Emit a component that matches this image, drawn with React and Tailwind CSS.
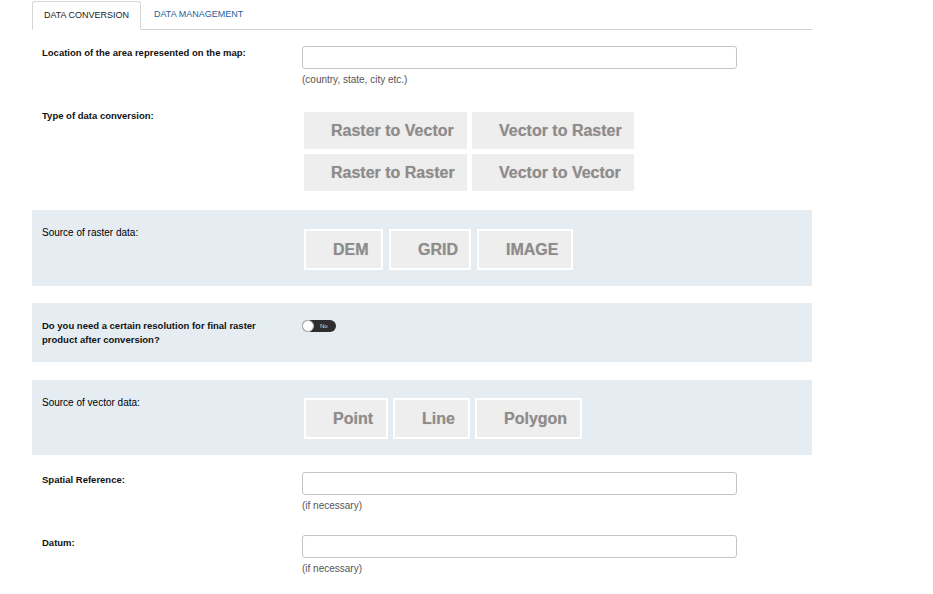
import React from 'react';

const font = { fontFamily: '"Liberation Sans", Arial, sans-serif' };

const Label = ({ children, bold = true }) => (
  <div className={`w-[260px] shrink-0 leading-[14px] ${bold ? 'font-bold text-[9.5px] text-[#111]' : 'text-[10px] text-black'}`}>{children}</div>
);

const TextField = ({ hint }) => (
  <div>
    <div className="w-[435px] h-[23px] border border-[#c4c4c4] rounded-[3px] bg-white" />
    <p className="mt-[5px] text-[10px] leading-[11px] text-[#555]">{hint}</p>
  </div>
);

const Choice = ({ children, w, framed }) => (
  <div
    className={`flex items-center bg-[#eeeeee] pl-[27px] text-[16px] font-bold text-[#8c8c8c] [text-shadow:0_0_1px_#c8b8b8] ${
      framed ? 'h-[41px] border-2 border-white' : 'h-[37px]'
    }`}
    style={{ width: w }}
  >
    {children}
  </div>
);

const Panel = ({ children, className }) => (
  <div className={`flex bg-[#e5edf3] pl-[10px] ${className}`}>{children}</div>
);

export default function App() {
  return (
    <div className="min-h-[594px] bg-white" style={font}>
      <div className="ml-[32px] w-[780px]">
        {/* Tabs */}
        <div className="flex h-[30px] pt-[1px] border-b border-[#cfcfcf]">
          <div className="w-[109px] -mb-[1px] flex items-center justify-center border border-b-white border-[#d6d6d6] rounded-t-[3px] bg-white text-[9px] text-[#222]">
            DATA CONVERSION
          </div>
          <div className="flex items-center pl-[13px] text-[9px] text-[#1f5f9a]">DATA MANAGEMENT</div>
        </div>

        {/* Location */}
        <div className="flex pl-[10px] pt-[16px]">
          <Label>Location of the area represented on the map:</Label>
          <TextField hint="(country, state, city etc.)" />
        </div>

        {/* Type of conversion */}
        <div className="flex pl-[10px] pt-[24px] pb-[19px]">
          <Label>Type of data conversion:</Label>
          <div className="pl-[2px] pt-[3px] grid grid-cols-[163px_162px] gap-x-[5px] gap-y-[5px]">
            <Choice w={163}>Raster to Vector</Choice>
            <Choice w={162}>Vector to Raster</Choice>
            <Choice w={163}>Raster to Raster</Choice>
            <Choice w={162}>Vector to Vector</Choice>
          </div>
        </div>

        {/* Raster source */}
        <Panel className="h-[76px] pt-[16px]">
          <Label bold={false}>Source of raster data:</Label>
          <div className="pl-[2px] pt-[3px] flex gap-[6px]">
            <Choice w={79} framed>DEM</Choice>
            <Choice w={82} framed>GRID</Choice>
            <Choice w={96} framed>IMAGE</Choice>
          </div>
        </Panel>

        {/* Resolution */}
        <Panel className="mt-[17px] h-[59px] pt-[15px]">
          <div className="pt-[1px]">
            <Label>
              Do you need a certain resolution for final raster
              <br />
              product after conversion?
            </Label>
          </div>
          <div className="pt-[2px]">
            <div className="relative w-[34px] h-[12px] rounded-full bg-[#2e2e2e]">
              <div className="absolute left-0 top-0 w-[12px] h-[12px] rounded-full bg-white border border-[#bbb]" />
              <span className="absolute left-[18px] top-[2px] text-[6px] leading-[8px] text-[#ddd]">No</span>
            </div>
          </div>
        </Panel>

        {/* Vector source */}
        <Panel className="mt-[18px] h-[75px] pt-[15px]">
          <div className="pt-[1px]"><Label bold={false}>Source of vector data:</Label></div>
          <div className="pl-[2px] pt-[3px] flex gap-[5px]">
            <Choice w={84} framed>Point</Choice>
            <Choice w={77} framed>Line</Choice>
            <Choice w={107} framed>Polygon</Choice>
          </div>
        </Panel>

        {/* Spatial reference */}
        <div className="flex pl-[10px] pt-[17px]">
          <div className="pt-[1px]"><Label>Spatial Reference:</Label></div>
          <TextField hint="(if necessary)" />
        </div>

        {/* Datum */}
        <div className="flex pl-[10px] pt-[24px]">
          <div className="pt-[1px]"><Label>Datum:</Label></div>
          <TextField hint="(if necessary)" />
        </div>
      </div>
    </div>
  );
}
